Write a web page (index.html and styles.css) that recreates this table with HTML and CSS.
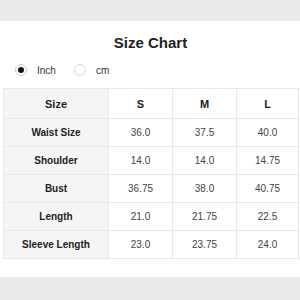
FILE: index.html
```html
<!DOCTYPE html>
<html>
<head>
<meta charset="utf-8">
<link rel="stylesheet" href="styles.css">
</head>
<body>
<div class="band"></div>
<div class="panel">
  <h1 class="title">Size Chart</h1>
  <div class="units">
    <label class="unit"><span class="radio checked"></span><span>Inch</span></label>
    <label class="unit"><span class="radio"></span><span>cm</span></label>
  </div>
  <table class="chart">
    <colgroup><col class="c0"><col class="c1"><col class="c1"><col class="c3"></colgroup>
    <tr class="head"><th>Size</th><th>S</th><th>M</th><th>L</th></tr>
    <tr><th>Waist Size</th><td>36.0</td><td>37.5</td><td>40.0</td></tr>
    <tr><th>Shoulder</th><td>14.0</td><td>14.0</td><td>14.75</td></tr>
    <tr><th>Bust</th><td>36.75</td><td>38.0</td><td>40.75</td></tr>
    <tr><th>Length</th><td>21.0</td><td>21.75</td><td>22.5</td></tr>
    <tr><th>Sleeve Length</th><td>23.0</td><td>23.75</td><td>24.0</td></tr>
  </table>
</div>
</body>
</html>
```
FILE: styles.css
```css
html, body { margin: 0; padding: 0; }
body {
  background: #ebebeb;
  font-family: "Liberation Sans", Arial, sans-serif;
  color: #333;
  width: 300px;
  height: 300px;
  overflow: hidden;
}
.band { height: 21px; }
.panel {
  background: #fff;
  height: 256px;
  padding: 13px 2px 0 3px;
  box-sizing: border-box;
}
.title {
  margin: 0;
  text-align: center;
  font-size: 15px;
  line-height: 18px;
  font-weight: bold;
  color: #222;
}
.units {
  display: flex;
  align-items: center;
  gap: 18px;
  height: 16px;
  margin: 10px 0 0 12px;
  font-size: 10px;
  color: #333;
}
.unit { display: flex; align-items: center; gap: 10px; }
.radio {
  width: 12px;
  height: 12px;
  border: 1px solid #d9d9d9;
  border-radius: 50%;
  box-sizing: border-box;
  display: flex;
  align-items: center;
  justify-content: center;
  background: #fff;
}
.radio.checked { border-color: #cfcfcf; }
.radio.checked::after {
  content: "";
  width: 6px;
  height: 6px;
  border-radius: 50%;
  background: #111;
}
.chart {
  margin-top: 10px;
  width: 295px;
  border-collapse: collapse;
  table-layout: fixed;
  font-size: 10px;
}
.c0 { width: 105px; }
.c1 { width: 64px; }
.c3 { width: 62px; }
.chart th, .chart td {
  border: 1px solid #e8e8e8;
  height: 27px;
  padding: 0;
  text-align: center;
}
.chart th { font-weight: bold; color: #222; }
.chart tr > th:first-child { background: #f5f5f5; }
.chart td { color: #444; }
.chart .head th { font-size: 11px; height: 29px; }
```
